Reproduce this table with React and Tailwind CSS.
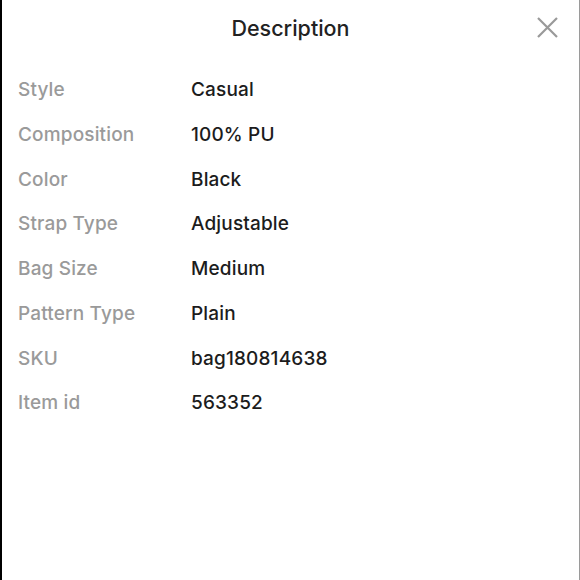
const rows = [
  ["Style", "Casual"],
  ["Composition", "100% PU"],
  ["Color", "Black"],
  ["Strap Type", "Adjustable"],
  ["Bag Size", "Medium"],
  ["Pattern Type", "Plain"],
  ["SKU", "bag180814638"],
  ["Item id", "563352"],
];

export default function App() {
  return (
    <div className="flex h-[580px] w-[580px] flex-col border-l-2 border-r border-l-black border-r-[#9a9a9a] bg-white font-['Inter',sans-serif]">
      <header className="relative flex h-[56px] items-center justify-center">
        <h1 className="text-[21.5px] font-medium text-[#222]">Description</h1>
        <button className="absolute right-[20px] top-[16px] text-[#999]">
          <svg width="23" height="23" viewBox="0 0 23 23" fill="none" stroke="currentColor" strokeWidth="2.2">
            <path d="M2 2 L21 21 M21 2 L2 21" />
          </svg>
        </button>
      </header>
      <dl className="mt-[12px] flex flex-col px-[16px]">
        {rows.map(([k, v]) => (
          <div key={k} className="flex h-[44.75px] items-center text-[19px] tracking-[0.15px]">
            <dt className="w-[173px] font-medium text-[#9a9a9a]">{k}</dt>
            <dd className="font-medium text-[#1c1c1c]">{v}</dd>
          </div>
        ))}
      </dl>
    </div>
  );
}
